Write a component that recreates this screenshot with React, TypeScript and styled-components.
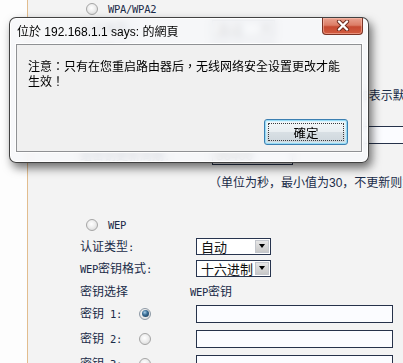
import React from "react";
import styled, { createGlobalStyle, css } from "styled-components";

const Global = createGlobalStyle`
  html, body { margin: 0; padding: 0; width: 403px; height: 363px; overflow: hidden; background: #fdfdfd; }
  #root { width: 403px; height: 363px; }
`;

const Page = styled.div`
  position: relative;
  display: flex;
  width: 403px;
  height: 363px;
  overflow: hidden;
  font-family: "Noto Sans CJK SC", sans-serif;
  font-size: 12px;
  color: #1a2b48;
`;

const Gutter = styled.div`
  flex: none;
  width: 27px;
  background: #fdfdfd;
  border-right: 1px solid #e2bd8e;
`;

const Content = styled.div`
  flex: 1;
  min-width: 0;
  background: #f3f3f3;
  padding-left: 52px;
  display: flex;
  flex-direction: column;
`;

const Row = styled.div<{ $h: number; $mt?: number; $cols: string }>`
  flex: none;
  height: ${(p) => p.$h}px;
  margin-top: ${(p) => p.$mt ?? 0}px;
  display: grid;
  grid-template-columns: ${(p) => p.$cols};
  align-items: center;
  white-space: nowrap;
`;

const OptionRow = styled.div<{ $h: number; $mt?: number }>`
  flex: none;
  height: ${(p) => p.$h}px;
  margin-top: ${(p) => p.$mt ?? 0}px;
  display: flex;
  align-items: center;
  gap: 10px;
  padding-left: 6px;
`;

const Label = styled.span`
  line-height: 15px;
`;

const Mono = styled.span`
  font-family: "DejaVu Sans Mono", "Liberation Mono", monospace;
  font-size: 10.5px;
  letter-spacing: -0.3px;
`;

const Cell = styled.div`
  display: flex;
  align-items: center;
  min-width: 0;
`;

const Radio = styled.span<{ $checked?: boolean }>`
  flex: none;
  width: 12px;
  height: 12px;
  box-sizing: border-box;
  border-radius: 50%;
  border: 1px solid #a5a5a5;
  background: radial-gradient(circle at 45% 40%, #ffffff 0%, #eeeeee 45%, #d3d3d3 100%);
  display: inline-flex;
  align-items: center;
  justify-content: center;
  ${(p) =>
    p.$checked &&
    css`
      border-color: #8e9aa6;
      &::after {
        content: "";
        width: 7px;
        height: 7px;
        border-radius: 50%;
        background: radial-gradient(circle at 40% 35%, #a9d0ea 0%, #3a6e96 40%, #16324e 100%);
      }
    `}
`;

const Select = styled.div<{ $w: number }>`
  width: ${(p) => p.$w}px;
  height: 17px;
  box-sizing: border-box;
  border: 1px solid #27344e;
  background: #ffffff;
  display: flex;
  align-items: center;
  justify-content: space-between;
  padding: 0 1px 0 4px;
  font-size: 13px;
  color: #111;
`;

const Arrow = styled.span`
  width: 14px;
  height: 13px;
  box-sizing: border-box;
  border: 1px solid #c3c6cc;
  background: linear-gradient(#e6e6e6, #c8c8c8);
  display: flex;
  align-items: center;
  justify-content: center;
  &::after {
    content: "";
    width: 0;
    height: 0;
    border-left: 3.5px solid transparent;
    border-right: 3.5px solid transparent;
    border-top: 4px solid #000;
  }
`;

const TextBox = styled.input<{ $w: number }>`
  width: ${(p) => p.$w}px;
  height: 18px;
  box-sizing: border-box;
  margin: 0;
  padding: 0 3px;
  border: 1px solid #26324a;
  background: #fbfcff;
  outline: none;
  flex: none;
`;

const Note = styled.span<{ $shift?: number }>`
  margin-left: ${(p) => p.$shift ?? 0}px;
  font-family: "Liberation Sans", "Noto Sans CJK SC", sans-serif;
  font-size: 12px;
`;

/* dialog */
const Dialog = styled.div`
  position: absolute;
  left: 9px;
  top: 17px;
  width: 360px;
  height: 146px;
  box-sizing: border-box;
  border: 1px solid rgba(45, 45, 45, 0.9);
  border-radius: 7px;
  background: rgba(246, 247, 249, 0.86);
  backdrop-filter: blur(3px);
  box-shadow: inset 0 0 0 1px rgba(255, 255, 255, 0.95), 3px 5px 10px rgba(0, 0, 0, 0.55);
  display: flex;
  flex-direction: column;
  padding: 0 6px 10px 6px;
  font-family: "Liberation Sans", "Noto Sans CJK TC", sans-serif;
  color: #000;
`;

const TitleBar = styled.div`
  flex: none;
  height: 26px;
  display: flex;
  align-items: flex-start;
  justify-content: space-between;
`;

const Title = styled.span`
  margin-top: 7px;
  padding-left: 1px;
  font-size: 12px;
  line-height: 15px;
  white-space: nowrap;
`;

const Close = styled.div`
  width: 41px;
  height: 17px;
  margin-right: -1px;
  box-sizing: border-box;
  border: 1px solid #7a3325;
  border-top: none;
  border-radius: 0 0 4px 4px;
  background: linear-gradient(#e9a290 0%, #dc7d66 45%, #c64a31 55%, #d25c40 100%);
  box-shadow: inset 0 0 0 1px rgba(255, 200, 185, 0.5);
  display: flex;
  align-items: center;
  justify-content: center;
  padding-bottom: 2px;
`;

const Panel = styled.div`
  flex: 1;
  box-sizing: border-box;
  border: 1px solid #8f9194;
  background: #f0f0f0;
  box-shadow: 0 0 0 1px rgba(255, 255, 255, 0.85);
  display: flex;
  flex-direction: column;
  padding: 15px 13px 6px 11px;
  font-family: "Liberation Sans", "Noto Sans CJK TC", sans-serif;
`;

const Message = styled.p`
  margin: 0;
  font-size: 12px;
  line-height: 15px;
`;

const OkButton = styled.button`
  position: relative;
  margin-top: auto;
  align-self: flex-end;
  width: 84px;
  height: 26px;
  box-sizing: border-box;
  border: 1px solid #3c7fb1;
  border-radius: 3px;
  background: linear-gradient(#f4f8fa 0%, #e9eef1 48%, #d8dfe4 52%, #cdd6dc 100%);
  box-shadow: inset 0 0 0 1px #98dcf5, inset 0 0 0 2px rgba(200, 240, 255, 0.6);
  font-family: "Noto Sans CJK TC", sans-serif;
  font-size: 12.5px;
  color: #000;
  padding: 0;
  &::after {
    content: "";
    position: absolute;
    inset: 3px;
    border: 1px dotted #3a3a3a;
    border-radius: 1px;
  }
`;

const CloseIcon = () => (
  <svg width="14" height="11" viewBox="0 0 14 11">
    <path d="M3 1.5 L11 9.5 M11 1.5 L3 9.5" stroke="#6b2a1d" strokeWidth="4.2" strokeLinecap="round" />
    <path d="M3 1.5 L11 9.5 M11 1.5 L3 9.5" stroke="#ffffff" strokeWidth="2.4" strokeLinecap="round" />
  </svg>
);

const WPA = "132px minmax(0, 1fr)";
const WEP = "116px minmax(0, 1fr)";
const KEYS = "59px 57px minmax(0, 1fr)";

export default function App() {
  return (
    <>
      <Global />
      <Page>
        <Gutter />
        <Content>
          <OptionRow $h={17}>
            <Radio />
            <Mono>WPA/WPA2</Mono>
          </OptionRow>
          <Row $h={22} $cols={WPA}>
            <Label>认证类型<Mono>:</Mono></Label>
            <Select $w={63}>自动<Arrow /></Select>
          </Row>
          <Row $h={22} $cols={WPA}>
            <Label>加密算法<Mono>:</Mono></Label>
            <Select $w={63}>自动<Arrow /></Select>
          </Row>
          <Row $h={22} $cols={WPA}>
            <Label><Mono>Radius</Mono>服务器<Mono>IP:</Mono></Label>
            <TextBox $w={110} readOnly />
          </Row>
          <Row $h={22} $cols={WPA}>
            <Label><Mono>Radius</Mono>端口<Mono>:</Mono></Label>
            <Cell>
              <TextBox $w={81} readOnly defaultValue="1812" />
              <Note $shift={1}>（1-65535，0表示默认端口：1812）</Note>
            </Cell>
          </Row>
          <Row $h={21} $mt={19} $cols={WPA}>
            <Label><Mono>Radius</Mono>密码<Mono>:</Mono></Label>
            <TextBox $w={200} readOnly />
          </Row>
          <Row $h={21} $cols={WPA}>
            <Label>组密钥更新周期<Mono>:</Mono></Label>
            <TextBox $w={81} readOnly defaultValue="86400" />
          </Row>
          <Row $h={30} $cols={WPA}>
            <span />
            <Note $shift={-3}>（单位为秒，最小值为30，不更新则为0）</Note>
          </Row>

          <OptionRow $h={21} $mt={18}>
            <Radio />
            <Mono>WEP</Mono>
          </OptionRow>
          <Row $h={22} $cols={WEP}>
            <Label>认证类型<Mono>:</Mono></Label>
            <Select $w={75}>自动<Arrow /></Select>
          </Row>
          <Row $h={22} $cols={WEP}>
            <Label><Mono>WEP</Mono>密钥格式<Mono>:</Mono></Label>
            <Select $w={75}>十六进制<Arrow /></Select>
          </Row>
          <Row $h={22} $cols={WEP}>
            <Label>密钥选择</Label>
            <Note $shift={-6}><Mono>WEP</Mono>密钥</Note>
          </Row>
          {[1, 2, 3].map((n) => (
            <Row key={n} $h={25} $cols={KEYS}>
              <Label>密钥<Mono> {n}:</Mono></Label>
              <Radio $checked={n === 1} />
              <TextBox $w={197} readOnly />
            </Row>
          ))}
        </Content>

        <Dialog>
          <TitleBar>
            <Title>位於 192.168.1.1 says: 的網頁</Title>
            <Close>
              <CloseIcon />
            </Close>
          </TitleBar>
          <Panel>
            <Message>注意：只有在您重启路由器后，无线网络安全设置更改才能生效！</Message>
            <OkButton>確定</OkButton>
          </Panel>
        </Dialog>
      </Page>
    </>
  );
}
